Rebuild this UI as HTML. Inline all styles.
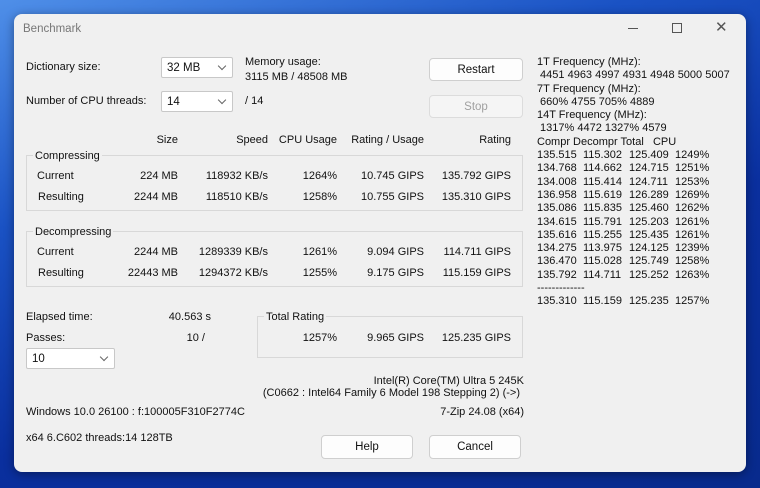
<!DOCTYPE html>
<html><head><meta charset="utf-8"><style>
*{margin:0;padding:0;box-sizing:border-box}
body{width:760px;height:488px;overflow:hidden;position:relative;font-family:"Liberation Sans",sans-serif;font-size:11px;color:#111;
background:linear-gradient(160deg,#4f8fe8 0%,#1a52c4 30%,#0a2f9e 60%,#082a8c 100%)}
.win{position:absolute;left:14px;top:14px;width:732px;height:458px;background:#f0f0f0;border-radius:8px;box-shadow:0 2px 10px rgba(0,0,0,.4)}
.t{position:absolute;white-space:pre;line-height:13px;transform:translateY(-5px)}
.r{position:absolute;white-space:pre;line-height:13px;transform:translate(-100%,-5px)}
.combo{position:absolute;background:#fff;border:1px solid #c8c8c8;border-radius:2px}
.combo span{position:absolute;left:5px;top:4px;font-size:11.5px}
.combo i{position:absolute;right:7px;top:5px;width:6px;height:6px;border-right:1px solid #666;border-bottom:1px solid #666;transform:rotate(45deg)}
.btn{position:absolute;background:#fdfdfd;border:1px solid #cfcfcf;border-radius:4px;text-align:center;font-size:11.5px;line-height:22px}
.grp{position:absolute;border:1px solid #d8d8d8}
.gl{position:absolute;background:#f0f0f0;padding:0 2px;white-space:pre;line-height:13px;top:-6px;left:6px}
.rp span{display:inline-block;width:46px}
</style></head><body>
<div class="win"></div>
<div class="t" style="left:23px;top:28px;color:#777;font-size:11.5px">Benchmark</div>
<div style="position:absolute;left:628px;top:28px;width:10px;height:1px;background:#555"></div>
<div style="position:absolute;left:672px;top:23px;width:10px;height:10px;border:1px solid #555"></div>
<div class="t" style="left:715px;top:26px;font-size:15px;color:#555">✕</div>

<div class="t" style="left:26px;top:66px">Dictionary size:</div>
<div class="combo" style="left:161px;top:57px;width:72px;height:21px"><span>32 MB</span><i></i></div>
<div class="t" style="left:245px;top:61px">Memory usage:</div>
<div class="t" style="left:245px;top:76px">3115 MB / 48508 MB</div>
<div class="t" style="left:26px;top:100px">Number of CPU threads:</div>
<div class="combo" style="left:161px;top:91px;width:72px;height:21px"><span>14</span><i></i></div>
<div class="t" style="left:245px;top:100px">/ 14</div>
<div class="btn" style="left:429px;top:58px;width:94px;height:23px">Restart</div>
<div class="btn" style="left:429px;top:95px;width:94px;height:23px;color:#a0a0a0;background:#f5f5f5;border-color:#dcdcdc">Stop</div>

<div class="r" style="left:178px;top:139px">Size</div>
<div class="r" style="left:268px;top:139px">Speed</div>
<div class="r" style="left:337px;top:139px">CPU Usage</div>
<div class="r" style="left:424px;top:139px">Rating / Usage</div>
<div class="r" style="left:511px;top:139px">Rating</div>

<div class="grp" style="left:26px;top:155px;width:497px;height:56px"><div class="gl">Compressing</div></div>
<div class="t" style="left:37px;top:175px">Current</div>
<div class="t" style="left:38px;top:196px">Resulting</div>
<div class="r" style="left:178px;top:175px">224 MB</div><div class="r" style="left:268px;top:175px">118932 KB/s</div><div class="r" style="left:337px;top:175px">1264%</div><div class="r" style="left:424px;top:175px">10.745 GIPS</div><div class="r" style="left:511px;top:175px">135.792 GIPS</div>
<div class="r" style="left:178px;top:196px">2244 MB</div><div class="r" style="left:268px;top:196px">118510 KB/s</div><div class="r" style="left:337px;top:196px">1258%</div><div class="r" style="left:424px;top:196px">10.755 GIPS</div><div class="r" style="left:511px;top:196px">135.310 GIPS</div>

<div class="grp" style="left:26px;top:231px;width:497px;height:56px"><div class="gl">Decompressing</div></div>
<div class="t" style="left:37px;top:251px">Current</div>
<div class="t" style="left:38px;top:272px">Resulting</div>
<div class="r" style="left:178px;top:251px">2244 MB</div><div class="r" style="left:268px;top:251px">1289339 KB/s</div><div class="r" style="left:337px;top:251px">1261%</div><div class="r" style="left:424px;top:251px">9.094 GIPS</div><div class="r" style="left:511px;top:251px">114.711 GIPS</div>
<div class="r" style="left:178px;top:272px">22443 MB</div><div class="r" style="left:268px;top:272px">1294372 KB/s</div><div class="r" style="left:337px;top:272px">1255%</div><div class="r" style="left:424px;top:272px">9.175 GIPS</div><div class="r" style="left:511px;top:272px">115.159 GIPS</div>

<div class="t" style="left:26px;top:316px">Elapsed time:</div>
<div class="r" style="left:211px;top:316px">40.563 s</div>
<div class="t" style="left:26px;top:337px">Passes:</div>
<div class="r" style="left:205px;top:337px">10 /</div>
<div class="combo" style="left:26px;top:348px;width:89px;height:21px"><span>10</span><i></i></div>

<div class="grp" style="left:257px;top:316px;width:266px;height:42px"><div class="gl">Total Rating</div></div>
<div class="r" style="left:337px;top:337px">1257%</div><div class="r" style="left:424px;top:337px">9.965 GIPS</div><div class="r" style="left:511px;top:337px">125.235 GIPS</div>

<div class="r" style="left:524px;top:380px">Intel(R) Core(TM) Ultra 5 245K</div>
<div class="r" style="left:520px;top:392px">(C0662 : Intel64 Family 6 Model 198 Stepping 2) (-&gt;)</div>
<div class="r" style="left:524px;top:411px">7-Zip 24.08 (x64)</div>
<div class="t" style="left:26px;top:411px">Windows 10.0 26100 : f:100005F310F2774C</div>
<div class="t" style="left:26px;top:437px">x64 6.C602 threads:14 128TB</div>
<div class="btn" style="left:321px;top:435px;width:92px;height:24px">Help</div>
<div class="btn" style="left:429px;top:435px;width:92px;height:24px">Cancel</div>

<div class="rp" style="position:absolute;left:537px;top:56px;line-height:13.3px;white-space:pre">1T Frequency (MHz):
 4451 4963 4997 4931 4948 5000 5007
7T Frequency (MHz):
 660% 4755 705% 4889
14T Frequency (MHz):
 1317% 4472 1327% 4579
Compr Decompr Total   CPU
<span>135.515</span><span>115.302</span><span>125.409</span>1249%
<span>134.768</span><span>114.662</span><span>124.715</span>1251%
<span>134.008</span><span>115.414</span><span>124.711</span>1253%
<span>136.958</span><span>115.619</span><span>126.289</span>1269%
<span>135.086</span><span>115.835</span><span>125.460</span>1262%
<span>134.615</span><span>115.791</span><span>125.203</span>1261%
<span>135.616</span><span>115.255</span><span>125.435</span>1261%
<span>134.275</span><span>113.975</span><span>124.125</span>1239%
<span>136.470</span><span>115.028</span><span>125.749</span>1258%
<span>135.792</span><span>114.711</span><span>125.252</span>1263%
-------------
<span>135.310</span><span>115.159</span><span>125.235</span>1257%</div>
</body></html>
